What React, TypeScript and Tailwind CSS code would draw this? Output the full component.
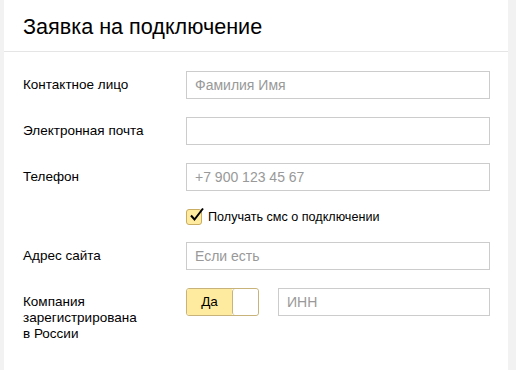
import React from "react";

function Input({ placeholder, className = "" }: { placeholder?: string; className?: string }) {
  return (
    <div
      className={`h-[28px] border border-[#cccccc] bg-white flex items-center pl-[8px] text-[14px] text-[#999999] ${className}`}
    >
      {placeholder}
    </div>
  );
}

function Row({ label, children }: { label: React.ReactNode; children: React.ReactNode }) {
  return (
    <div className="flex items-start">
      <div className="w-[163px] shrink-0 text-[13.5px] leading-[28px] text-black">{label}</div>
      <div className="flex-1">{children}</div>
    </div>
  );
}

export default function App() {
  return (
    <div
      className="w-[516px] h-[370px] bg-[#f2f2f2] flex overflow-hidden"
      style={{ fontFamily: '"Liberation Sans", Arial, sans-serif' }}
    >
      <div className="ml-[4px] w-[504px] h-full bg-white flex flex-col">
        <div className="h-[52px] border-b border-[#e5e5e5] pl-[19px] flex items-center">
          <span className="text-[21.6px] text-black leading-none pt-[2px]">Заявка на подключение</span>
        </div>
        <div className="pl-[19px] pr-[18px] pt-[19px] flex flex-col">
          <Row label="Контактное лицо">
            <Input placeholder="Фамилия Имя" />
          </Row>
          <div className="h-[18px]" />
          <Row label="Электронная почта">
            <Input />
          </Row>
          <div className="h-[18px]" />
          <Row label="Телефон">
            <Input placeholder="+7 900 123 45 67" />
          </Row>
          <div className="h-[18px]" />
          <div className="flex items-center pl-[163px] h-[16px]">
            <div className="w-[16px] h-[16px] rounded-[3px] bg-[#ffeba0] border border-[#c9ad62] flex items-center justify-center relative">
              <svg width="18" height="16" viewBox="0 0 18 16" className="absolute left-[1px] top-[-3px]">
                <path d="M3 8.5 L6.5 12.5 L15 1.5" fill="none" stroke="#000" strokeWidth="2" strokeLinejoin="miter" />
              </svg>
            </div>
            <span className="ml-[6px] text-[12.6px] text-black">Получать смс о подключении</span>
          </div>
          <div className="h-[17px]" />
          <Row label="Адрес сайта">
            <Input placeholder="Если есть" />
          </Row>
          <div className="h-[18px]" />
          <div className="flex items-start">
            <div className="w-[163px] shrink-0 text-[13.5px] leading-[16px] text-black pt-[6px]">
              Компания
              <br />
              зарегистрирована
              <br />в России
            </div>
            <div className="flex-1 flex items-start">
              <div className="w-[73px] h-[28px] flex rounded-[3px] border border-[#c8b47a] overflow-hidden">
                <div className="w-[45px] h-full bg-[#ffeba0] flex items-center justify-center text-[13.5px] text-black">
                  Да
                </div>
                <div className="flex-1 h-full bg-white border-l border-[#c8b47a] rounded-[3px]" />
              </div>
              <Input placeholder="ИНН" className="ml-[19px] flex-1" />
            </div>
          </div>
        </div>
      </div>
    </div>
  );
}
